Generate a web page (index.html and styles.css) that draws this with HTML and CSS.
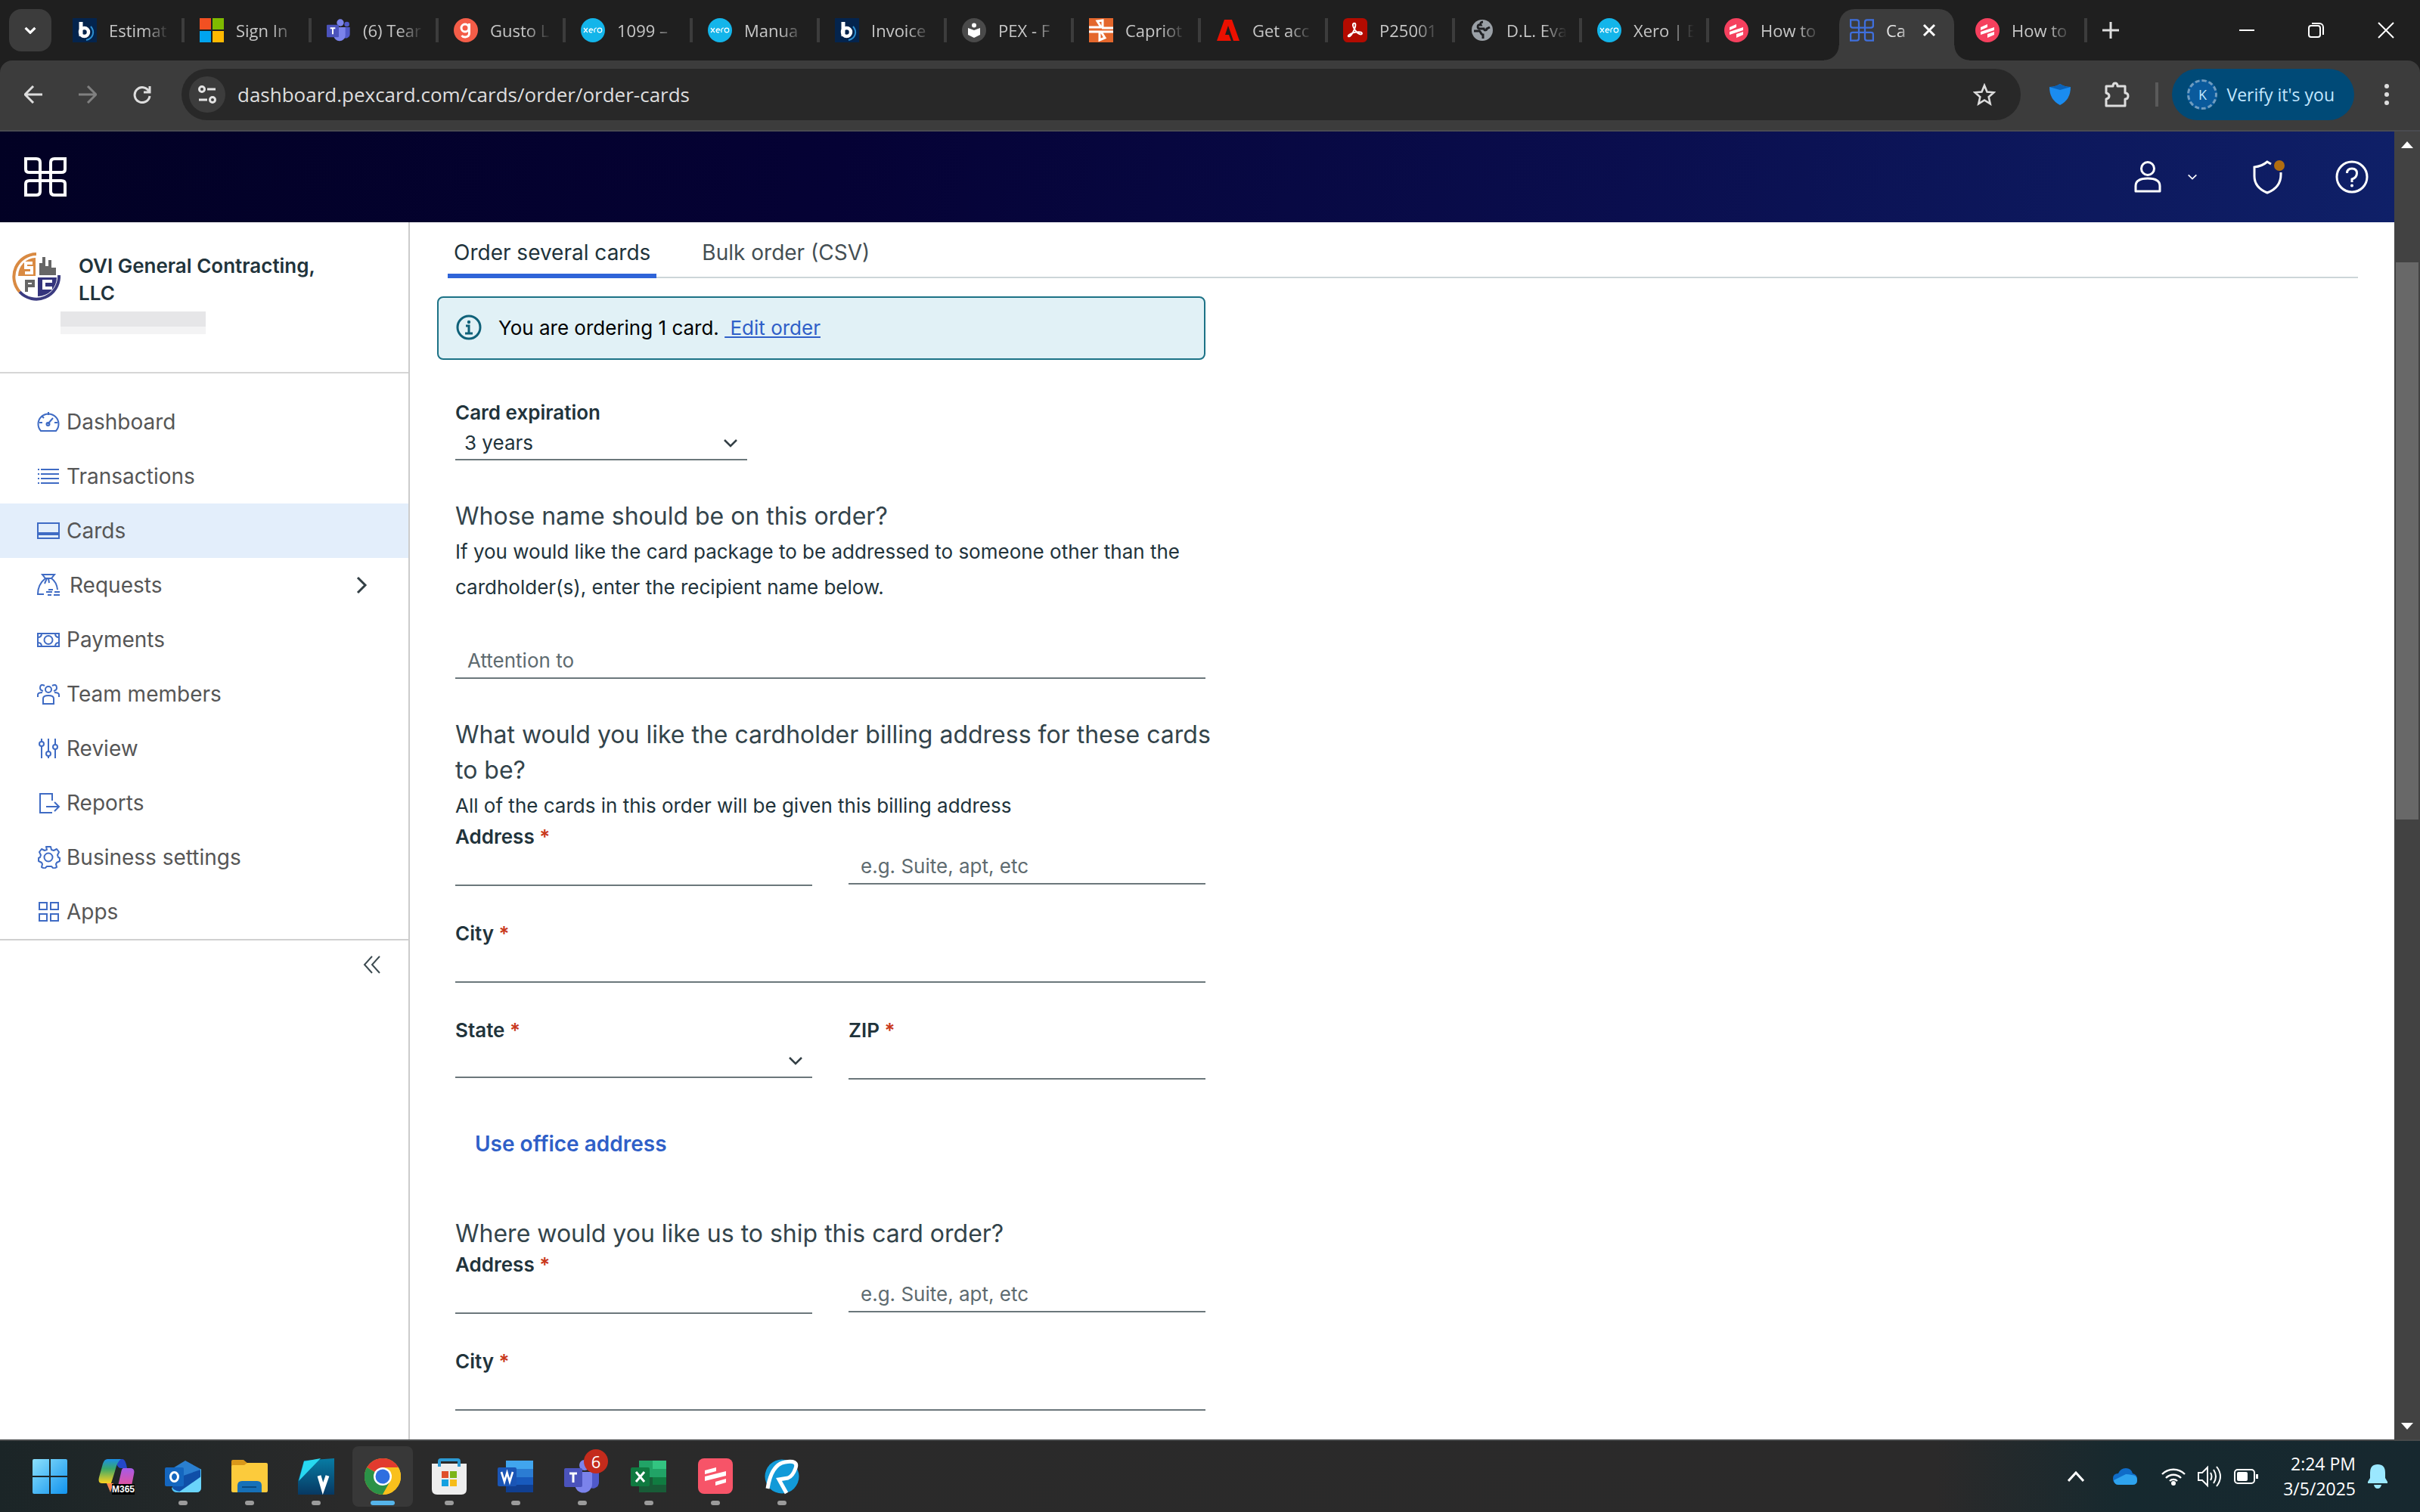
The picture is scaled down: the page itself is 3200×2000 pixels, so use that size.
FILE: index.html
```html
<!DOCTYPE html>
<html lang="en">
<head>
<meta charset="utf-8">
<title>Cards - PEX</title>
<link rel="stylesheet" href="styles.css">
</head>
<body>
<svg class="defs" aria-hidden="true">
  <defs>
    <symbol id="bill" viewBox="0 0 32 32"><rect width="32" height="32" fill="#04244d"/><path d="M11 5v19" stroke="#fff" stroke-width="5"/><circle cx="15.500" cy="18.500" r="5.500" fill="none" stroke="#fff" stroke-width="4.500"/><path d="M24 11c6 7 3 16-6 18" stroke="#2d8fd0" stroke-width="2" fill="none"/></symbol>
    <symbol id="ms" viewBox="0 0 32 32"><path fill="#f25022" d="M0 0h15v15H0z"/><path fill="#7fba00" d="M17 0h15v15H17z"/><path fill="#00a4ef" d="M0 17h15v15H0z"/><path fill="#ffb900" d="M17 17h15v15H17z"/></symbol>
    <symbol id="teams" viewBox="0 0 48 48"><circle cx="27" cy="9" r="7" fill="#7b83eb"/><circle cx="40" cy="12" r="5" fill="#5059c9"/><path d="M32 18h14v14a8 8 0 0 1-14 5z" fill="#5059c9"/><path d="M14 18h23v16a11 11 0 0 1-23 0z" fill="#7b83eb"/><rect y="13" width="24" height="25" rx="2" fill="#4b53bc"/><path d="M7 20h10M12 20v12" stroke="#fff" stroke-width="3"/></symbol>
    <symbol id="gusto" viewBox="0 0 32 32"><circle cx="16" cy="16" r="16" fill="#f45d48"/><circle cx="15" cy="13" r="5" fill="none" stroke="#fff" stroke-width="3"/><path d="M20.500 7v13c0 6-8 6-10 3" fill="none" stroke="#fff" stroke-width="3"/></symbol>
    <symbol id="xero" viewBox="0 0 32 32"><circle cx="16" cy="16" r="16" fill="#13b5ea"/><path d="M4 13l5 6M9 13l-5 6M11 16h5a2.500 2.500 0 1 0-1 2.500M18 19v-3q0-3 3-3" fill="none" stroke="#fff" stroke-width="1.200"/><circle cx="25" cy="16" r="2.800" fill="none" stroke="#fff" stroke-width="1.200"/></symbol>
    <symbol id="reader" viewBox="0 0 32 32"><circle cx="16" cy="16" r="16" fill="#4a4a4a"/><circle cx="16" cy="9.500" r="3" fill="#fff"/><path d="M8 13l8 3 8-3v9l-8 4-8-4z" fill="#fff"/></symbol>
    <symbol id="capriotti" viewBox="0 0 32 32"><rect width="32" height="32" fill="#e4672c"/><path d="M0 12h16l-5-8v0l7-1v9M32 18H16l5 8-7 3V18M0 18h15M17 13h15" fill="none" stroke="#fff" stroke-width="3"/></symbol>
    <symbol id="adobe" viewBox="0 0 32 32"><path d="M11 2h10l10 28h-8L16 10l-4 12h5l3 8H1z" fill="#eb1000"/></symbol>
    <symbol id="pdf" viewBox="0 0 32 32"><rect width="32" height="32" rx="6" fill="#b30b00"/><path d="M14 7c4-2 3 6-3 15-3 4-6 2-3 0 5-4 16-5 17-2 0 3-6 1-9-4-3-4-4-8-2-9z" fill="none" stroke="#fff" stroke-width="2"/></symbol>
    <symbol id="globe" viewBox="0 0 32 32"><circle cx="16" cy="16" r="14" fill="#9aa0a6"/><path d="M17 5c-3 0-4 2-3 4h-3c-2 2-1 5 2 5h5c1 3 4 2 4 0l4-2M5 17h7c2 0 2 5 5 5v5" fill="none" stroke="#202124" stroke-width="3"/></symbol>
    <symbol id="ramp" viewBox="0 0 32 32"><circle cx="16" cy="16" r="16" fill="#f5405e"/><path d="M7 12l9-4v4l-9 4zM7 18l18-6v4L7 22zM16 21l9-3v4l-9 4z" fill="#fff"/></symbol>
    <symbol id="loops" viewBox="0 0 56 52"><path d="M2 2H16q5 0 5 5V45q0 5-5 5H2V35q0-4 5-4h42q5 0 5 4v15H40q-5 0-5-5V7q0-5 5-5h14V16q0 4-5 4H7q-5 0-5-4z" fill="none" stroke="currentColor" stroke-width="4"/></symbol>
    <symbol id="chev" viewBox="0 0 20 12"><path d="M2 2l8 8 8-8" fill="none" stroke="currentColor" stroke-width="2.500"/></symbol>
  </defs>
</svg>

<header class="browser">
  <div class="tabstrip">
    <button class="tab-search" aria-label="Search tabs"><svg width="16" height="10" viewBox="0 0 20 12"><path d="M2 2l8 8 8-8" fill="none" stroke="#fff" stroke-width="4"/></svg></button>
    <div class="tab"><svg class="fav"><use href="#bill"/></svg><span class="tab-title">Estimat</span></div>
    <div class="tab"><svg class="fav"><use href="#ms"/></svg><span class="tab-title">Sign In</span></div>
    <div class="tab"><svg class="fav"><use href="#teams"/></svg><span class="tab-title">(6) Tear</span></div>
    <div class="tab"><svg class="fav"><use href="#gusto"/></svg><span class="tab-title">Gusto L</span></div>
    <div class="tab"><svg class="fav"><use href="#xero"/></svg><span class="tab-title">1099 –</span></div>
    <div class="tab"><svg class="fav"><use href="#xero"/></svg><span class="tab-title">Manua</span></div>
    <div class="tab"><svg class="fav"><use href="#bill"/></svg><span class="tab-title">Invoice</span></div>
    <div class="tab"><svg class="fav"><use href="#reader"/></svg><span class="tab-title">PEX - F</span></div>
    <div class="tab"><svg class="fav"><use href="#capriotti"/></svg><span class="tab-title">Capriot</span></div>
    <div class="tab"><svg class="fav"><use href="#adobe"/></svg><span class="tab-title">Get acc</span></div>
    <div class="tab"><svg class="fav"><use href="#pdf"/></svg><span class="tab-title">P25001</span></div>
    <div class="tab"><svg class="fav"><use href="#globe"/></svg><span class="tab-title">D.L. Eva</span></div>
    <div class="tab"><svg class="fav"><use href="#xero"/></svg><span class="tab-title">Xero | E</span></div>
    <div class="tab tab-plain"><svg class="fav"><use href="#ramp"/></svg><span class="tab-title">How to</span></div>
    <div class="tab tab-active"><svg class="fav"><use href="#loops"/></svg><span class="tab-title">Ca</span><button class="tab-close" aria-label="Close tab"><svg width="18" height="18" viewBox="0 0 18 18"><path d="M2 2l14 14M16 2L2 16" stroke="#fff" stroke-width="3"/></svg></button></div>
    <div class="tab tab-after"><svg class="fav"><use href="#ramp"/></svg><span class="tab-title">How to</span></div>
    <button class="new-tab" aria-label="New tab"><svg width="22" height="22" viewBox="0 0 22 22"><path d="M11 0v22M0 11h22" stroke="#ddd" stroke-width="3"/></svg></button>
    <div class="window-controls">
      <button aria-label="Minimize"><svg width="22" height="22" viewBox="0 0 22 22"><path d="M1 11h20" stroke="#fff" stroke-width="2"/></svg></button>
      <button aria-label="Restore"><svg width="22" height="22" viewBox="0 0 22 22"><g fill="none" stroke="#fff" stroke-width="2"><rect x="1" y="5" width="15" height="15" rx="3"/><path d="M5 2h10a5 5 0 0 1 5 5v10"/></g></svg></button>
      <button aria-label="Close"><svg width="22" height="22" viewBox="0 0 22 22"><path d="M1 1l20 20M21 1L1 21" stroke="#fff" stroke-width="2"/></svg></button>
    </div>
  </div>
  <div class="toolbar">
    <div class="nav-buttons">
      <button aria-label="Back"><svg width="24" height="24" viewBox="0 0 24 24"><path d="M12 1L1 12l11 11M1 12h23" fill="none" stroke="#ddd" stroke-width="3"/></svg></button>
      <button aria-label="Forward"><svg width="24" height="24" viewBox="0 0 24 24"><path d="M12 1l11 11-11 11M23 12H0" fill="none" stroke="#808080" stroke-width="3"/></svg></button>
      <button aria-label="Reload"><svg width="24" height="24" viewBox="0 0 24 24"><path d="M22 1v8h-8M21 8A10 10 0 1 0 22 14" fill="none" stroke="#ddd" stroke-width="3"/></svg></button>
    </div>
    <div class="omnibox">
      <span class="site-info"><svg width="26" height="26" viewBox="0 0 26 26"><g fill="none" stroke="#e3e3e3" stroke-width="3"><circle cx="6" cy="6" r="3.500"/><path d="M13 6h11M2 20h11"/><circle cx="20" cy="20" r="3.500"/></g></svg></span>
      <input class="url" aria-label="Address and search bar" value="dashboard.pexcard.com/cards/order/order-cards">
      <svg width="30" height="30" viewBox="0 0 30 30"><path d="M15 3l3.500 8.500 9 .8-6.800 6 2 9L15 22.500 7.300 27.300l2-9-6.800-6 9-.8z" fill="none" stroke="#ddd" stroke-width="2.600"/></svg>
    </div>
    <svg class="extension" width="28" height="28" viewBox="0 0 28 28"><path d="M14 0q6 4 14 4 0 17-14 24Q0 21 0 4q8 0 14-4z" fill="#1a8cf0"/><path d="M0 4q7 0 14-4 6 4 14 4l-14 4z" fill="#0b62b8"/></svg>
    <svg width="34" height="34" viewBox="0 0 34 34"><path d="M3 6h9q0-4 3-4t3 4h10v9q4 0 4 4t-4 4v9H3v-9q4-1 4-4t-4-4z" fill="none" stroke="#ddd" stroke-width="3" stroke-linejoin="round"/></svg>
    <span class="bar-divider"></span>
    <button class="verify"><span class="avatar">K</span>Verify it's you</button>
    <svg width="6" height="28" viewBox="0 0 6 28"><g fill="#ddd"><circle cx="3" cy="3" r="3"/><circle cx="3" cy="14" r="3"/><circle cx="3" cy="25" r="3"/></g></svg>
  </div>
</header>

<div class="viewport">
  <div class="app">
    <div class="app-header">
      <a href="#" class="brand" aria-label="PEX"><svg width="56" height="52"><use href="#loops"/></svg></a>
      <div class="header-actions">
        <button class="user" aria-label="Account"><svg width="36" height="44" viewBox="0 0 36 44"><g fill="none" stroke="#fff" stroke-width="3"><circle cx="18" cy="11" r="8.500"/><path d="M2 41V34q0-10 16-10t16 10v7z" stroke-linejoin="round"/></g></svg><svg width="14" height="8"><use href="#chev"/></svg></button>
        <button class="shield" aria-label="Security"><svg width="42" height="46" viewBox="0 0 42 46"><path d="M24 6L19 3Q12 9 2 10v12q0 15 17 22Q37 37 37 20v-3" fill="none" stroke="#fff" stroke-width="3"/><circle cx="35" cy="8" r="7" fill="#b06d10"/></svg></button>
        <button aria-label="Help"><svg width="44" height="44" viewBox="0 0 44 44"><g fill="none" stroke="#fff" stroke-width="3"><circle cx="22" cy="22" r="20"/><path d="M15.500 17q0-6 6.500-6t6.500 6-6.500 8v4"/></g><circle cx="22" cy="33.500" r="2" fill="#fff"/></svg></button>
      </div>
    </div>
    <div class="app-body">
      <aside class="sidebar">
        <div class="company">
          <svg width="64" height="64" viewBox="0 0 64 64"><path d="M32 2A30 30 0 0 0 10 52" fill="none" stroke="#d98a42" stroke-width="4"/><path d="M10 52A30 30 0 0 0 62 30" fill="none" stroke="#3b3b80" stroke-width="4"/><path d="M31 7v24H8A24 24 0 0 1 31 7z" fill="#d98a42"/><path d="M34 33h25A25 25 0 0 1 34 58z" fill="#33337c"/><path d="M36 30V14h4V6h4v12h4V10h4v10h6v10z" fill="#666"/><path d="M27 14h-9v6h8v7h-9" fill="none" stroke="#fff" stroke-width="4"/><path d="M19 52V38h9v6h-9" fill="none" stroke="#666" stroke-width="4"/><path d="M53 38h-11v9h11" fill="none" stroke="#fff" stroke-width="4"/></svg>
          <div class="company-text"><strong class="company-name">OVI General Contracting, LLC</strong><span class="redacted"></span></div>
        </div>
        <nav class="menu">
          <a href="#"><svg viewBox="0 0 30 30"><path d="M5 27A13.500 13.500 0 1 1 25 27z"/><path d="M15 2v4M3 16h4M23 16h4M6 7l3 3M14 18l7-8"/><circle cx="14.500" cy="18" r="2"/></svg>Dashboard</a>
          <a href="#"><svg viewBox="0 0 30 30"><path d="M1 6h2M5 6h24M1 12h2M5 12h24M1 18h2M5 18h24M1 24h2M5 24h24"/></svg>Transactions</a>
          <a href="#" class="current"><svg viewBox="0 0 30 30"><path d="M1 5h28v20H1zM1 18h28M1 20h28"/></svg>Cards</a>
          <a href="#"><svg viewBox="0 0 30 30"><path d="M7 1h16l-4 5h-8zM11 6Q1 14 1 27h8M19 6q7 5 8 15M13 6l-3 7M15 6l1 6M15 21h6M12 24h8M23 24h7M14 28h5M22 28h8"/></svg><span class="wide-gap">Requests</span><svg class="more" viewBox="0 0 16 24"><path d="M3 2l10 10L3 22"/></svg></a>
          <a href="#"><svg viewBox="0 0 30 30"><path d="M1 7h28v17H1zM1 12q5 0 5-5M24 7q0 5 5 5M1 19q5 0 5 5M29 19q-5 0-5 5"/><circle cx="15" cy="15.500" r="5.500"/></svg>Payments</a>
          <a href="#"><svg viewBox="0 0 30 30"><circle cx="15" cy="9" r="4"/><path d="M8 28v-7q0-4 7-4t7 4v7zM10 4Q4 1 4 7q0 3 4 4M20 4q6-3 6 3 0 3-4 4M1 19v-3q0-3 6-3M29 19v-3q0-3-6-3"/></svg>Team members</a>
          <a href="#"><svg viewBox="0 0 30 30"><path d="M6 2v4M6 12v16M15 2v17M15 25v3M24 2v8M24 16v12"/><circle cx="6" cy="9" r="3"/><circle cx="15" cy="22" r="3"/><circle cx="24" cy="13" r="3"/></svg>Review</a>
          <a href="#"><svg viewBox="0 0 30 30"><path d="M20 12V3H4v25h16M12 20h16M23 14l6 6-6 6"/></svg>Reports</a>
          <a href="#"><svg viewBox="0 0 30 30"><path d="M12 1h6l1 4 3 1 4-2 3 4-2 4 1 3 2 1v4l-4 2-1 2 1 4-4 2-3-3h-6l-3 3-4-2 1-4-1-2-4-2v-4l2-1 1-3-2-4 3-4 4 2 3-1z" stroke-linejoin="round"/><circle cx="15" cy="15" r="5.500"/></svg>Business settings</a>
          <a href="#"><svg viewBox="0 0 30 30"><path d="M3 3h10v9H3zM18 3h10v9H18zM3 18h10v9H3zM18 18h10v9H18z"/></svg>Apps</a>
        </nav>
        <button class="collapse" aria-label="Collapse menu"><svg width="24" height="24" viewBox="0 0 24 24"><path d="M12 1L2 12l10 11M22 1L12 12l10 11" fill="none" stroke="#3c4a50" stroke-width="2"/></svg></button>
      </aside>
      <main class="content">
        <div class="page-tabs" role="tablist">
          <button class="page-tab selected" role="tab" aria-selected="true">Order several cards</button>
          <button class="page-tab" role="tab" aria-selected="false">Bulk order (CSV)</button>
        </div>
        <form class="order">
          <div class="alert">
            <svg width="34" height="34" viewBox="0 0 34 34"><circle cx="17" cy="17" r="15" fill="none" stroke="#0f6179" stroke-width="3"/><circle cx="17" cy="10" r="2.200" fill="#0f6179"/><path d="M13 15h4v9M12 25h10" fill="none" stroke="#0f6179" stroke-width="3"/></svg>
            <p>You are ordering 1 card.&nbsp;<a href="#">&nbsp;Edit order</a></p>
          </div>
          <div class="fields">
            <div class="field expiration">
              <label for="exp">Card expiration</label>
              <span class="select"><select id="exp"><option>3 years</option></select><svg width="20" height="12"><use href="#chev"/></svg></span>
            </div>
            <section>
              <h2>Whose name should be on this order?</h2>
              <p>If you would like the card package to be addressed to someone other than the cardholder(s), enter the recipient name below.</p>
              <div class="field attention"><input aria-label="Attention to" placeholder="Attention to"></div>
            </section>
            <section>
              <h2>What would you like the cardholder billing address for these cards to be?</h2>
              <p>All of the cards in this order will be given this billing address</p>
              <div class="grid">
                <div class="field"><label for="b-addr">Address <span class="req">*</span></label><input id="b-addr"></div>
                <div class="field unlabeled"><input aria-label="Address line 2" placeholder="e.g. Suite, apt, etc"></div>
                <div class="field full"><label for="b-city">City <span class="req">*</span></label><input id="b-city"></div>
                <div class="field"><label for="b-state">State <span class="req">*</span></label><span class="select"><select id="b-state"><option></option></select><svg width="20" height="12"><use href="#chev"/></svg></span></div>
                <div class="field"><label for="b-zip">ZIP <span class="req">*</span></label><input id="b-zip"></div>
              </div>
              <button type="button" class="link-button">Use office address</button>
            </section>
            <section class="shipping">
              <h2>Where would you like us to ship this card order?</h2>
              <div class="grid">
                <div class="field"><label for="s-addr">Address <span class="req">*</span></label><input id="s-addr"></div>
                <div class="field unlabeled"><input aria-label="Shipping address line 2" placeholder="e.g. Suite, apt, etc"></div>
                <div class="field full"><label for="s-city">City <span class="req">*</span></label><input id="s-city"></div>
              </div>
            </section>
          </div>
        </form>
      </main>
    </div>
  </div>
  <div class="scrollbar">
    <svg width="16" height="9" viewBox="0 0 16 9"><path d="M8 0l8 9H0z" fill="#fff"/></svg>
    <div class="track"><div class="thumb"></div></div>
    <svg width="16" height="9" viewBox="0 0 16 9"><path d="M8 9L0 0h16z" fill="#fff"/></svg>
  </div>
</div>

<footer class="taskbar">
  <div class="apps">
    <button class="task" aria-label="Start"><svg width="48" height="48" viewBox="0 0 48 48"><defs><linearGradient id="win" x2="1" y2="1"><stop stop-color="#8be0fc"/><stop offset="1" stop-color="#1193ee"/></linearGradient></defs><path fill="url(#win)" d="M1 3q0-2 2-2h20v22H1zM25 1h20q2 0 2 2v20H25zM1 25h22v22H3q-2 0-2-2zM25 25h22v20q0 2-2 2H25z"/></svg></button>
    <button class="task" aria-label="Microsoft 365 Copilot"><svg width="48" height="48" viewBox="0 0 48 48"><defs><linearGradient id="cpl" x2="0" y2="1"><stop stop-color="#1a8fe8"/><stop offset=".4" stop-color="#3aa86a"/><stop offset="1" stop-color="#ffd21e"/></linearGradient><linearGradient id="cpr" x2="0" y2="1"><stop stop-color="#a65be8"/><stop offset="1" stop-color="#f0508c"/></linearGradient></defs><path d="M24 1h8q4 0 6 12h-8q-4 0-6-6z" fill="#2448c8"/><path d="M12 1h18q-5 3-8 16l-5 16H5q-6 0-4-8L6 7q2-6 6-6z" fill="url(#cpl)"/><path d="M33 13h9q7 0 5 8l-4 20H25l5-22q1-6 3-6z" fill="url(#cpr)"/><path d="M11 33h9l-4 12z" fill="#ff8a50"/><rect x="18" y="34" width="30" height="14" fill="#000"/><text x="33" y="45" class="m365">M365</text></svg></button>
    <button class="task running" aria-label="Outlook"><svg width="48" height="48" viewBox="0 0 48 48"><path d="M9 14L27 3l20 11v10L20 34z" fill="#2a7fd0"/><path d="M48 14v24q0 7-6 7H16q-6 0-7-6z" fill="#53c4f4"/><path d="M10 28l37-13v12L20 44q-10-2-10-6z" fill="#0f4fa8"/><path d="M48 24v14q0 7-6 7H18z" fill="#6ad4fa"/><rect y="12" width="25" height="25" rx="2" fill="#1466bf"/><ellipse cx="12.500" cy="24.500" rx="5" ry="6" fill="none" stroke="#fff" stroke-width="3"/></svg></button>
    <button class="task running" aria-label="File Explorer"><svg width="48" height="48" viewBox="0 0 48 48"><path d="M0 4q0-2 2-2h14l6 5v8H0z" fill="#d9981a"/><path d="M0 11q0-2 2-2h15l4-3h25q2 0 2 2v35q0 2-2 2H2q-2 0-2-2z" fill="#fccb3c"/><path d="M8 45V36q0-6 6-6h20q6 0 6 6v9z" fill="#1670b8"/><path d="M14 38h19" stroke="#0a4a80" stroke-width="2"/></svg></button>
    <button class="task running" aria-label="Viewer"><svg width="48" height="48" viewBox="0 0 48 48"><defs><linearGradient id="vu" x2="0" y2="1"><stop stop-color="#087ca4"/><stop offset="1" stop-color="#073862"/></linearGradient></defs><path d="M8 3L48 0v48H0V30z" fill="url(#vu)"/><path d="M8 4l22-4L1 30z" fill="#28d8f0"/><path d="M28 23l5 17 6-17" fill="none" stroke="#fff" stroke-width="5"/></svg></button>
    <button class="task running active" aria-label="Chrome"><svg width="48" height="48" viewBox="0 0 48 48"><circle cx="24" cy="24" r="24" fill="#f9c01c"/><path d="M24 24L3.200 12A24 24 0 0 1 44.800 12H24z" fill="#e23b2e"/><path d="M3.200 12A24 24 0 0 0 24 48l10-18-10-6z" fill="#2b9247"/><path d="M24 12h20.800A24 24 0 0 1 24 48l10.400-18z" fill="#f9c01c"/><circle cx="24" cy="24" r="12" fill="#fff"/><circle cx="24" cy="24" r="9.500" fill="#2f6fe0"/></svg></button>
    <button class="task running" aria-label="Microsoft Store"><svg width="48" height="48" viewBox="0 0 48 48"><path d="M1 7h46v34q0 7-7 7H8q-7 0-7-7z" fill="#eee"/><path d="M11 11V4q0-2 2-2h22q2 0 2 2v7" fill="none" stroke="#2c9ad4" stroke-width="4"/><path fill="#e0502c" d="M14 17h9v9h-9z"/><path fill="#7bb518" d="M25 17h9v9h-9z"/><path fill="#14a0e0" d="M14 28h9v9h-9z"/><path fill="#f6bc18" d="M25 28h9v9h-9z"/></svg></button>
    <button class="task running" aria-label="Word"><svg width="48" height="48" viewBox="0 0 48 48"><path fill="#41a5ee" d="M11 3h36v11H11z"/><path fill="#2b7cd3" d="M11 14h36v11H11z"/><path fill="#185abd" d="M11 25h36v10H11z"/><path fill="#103f91" d="M11 35h36v10H11z"/><rect y="12" width="25" height="25" rx="2" fill="#1a55b5"/><path d="M5 18l4 13 3.500-12 3.500 12 4-13" fill="none" stroke="#fff" stroke-width="2.600"/></svg></button>
    <button class="task running" aria-label="Teams"><svg width="48" height="48"><use href="#teams"/></svg><span class="badge">6</span></button>
    <button class="task running" aria-label="Excel"><svg width="48" height="48" viewBox="0 0 48 48"><path fill="#21a366" d="M11 3h18v22H11z"/><path fill="#33c481" d="M29 3h18v11H29z"/><path fill="#21a366" d="M29 14h18v11H29z"/><path fill="#185c37" d="M11 25h36v20H11z"/><path fill="#107c41" d="M29 25h18v10H29z"/><rect y="12" width="25" height="25" rx="2" fill="#0f7a40"/><path d="M7 18l11 13M18 18L7 31" stroke="#fff" stroke-width="3"/></svg></button>
    <button class="task running" aria-label="Ramp"><svg width="48" height="48" viewBox="0 0 48 48"><rect x="1" width="46" height="47" rx="8" fill="#f75468"/><path d="M10 16l15-4v5l-15 4zM10 24l28-7v6l-28 7zM24 31l14-4v5l-14 4z" fill="#fff"/></svg></button>
    <button class="task running" aria-label="Revu"><svg width="48" height="48" viewBox="0 0 48 48"><circle cx="24" cy="24" r="22.500" fill="#129ad8"/><path d="M5 40Q10 8 28 5t14 8-10 13l-12 2 10 18" fill="none" stroke="#fff" stroke-width="5"/></svg></button>
  </div>
  <div class="tray">
    <svg class="caret" width="22" height="14" viewBox="0 0 22 14"><path d="M1 13L11 2l10 11" fill="none" stroke="#fff" stroke-width="3"/></svg>
    <svg class="cloud" width="32" height="24" viewBox="0 0 32 24"><path d="M7 22Q0 22 0 15t7-7q3-7 10-7 7 0 9 7 6 1 6 8t-6 6z" fill="#0f6cc8"/><path d="M1 17l16-8q4 0 8 1 7 0 7 7 0 6-6 6H7q-5 0-6-6z" fill="#2ea3ee"/></svg>
    <svg width="32" height="26" viewBox="0 0 32 26"><g fill="none" stroke="#fff" stroke-width="2.400"><path d="M1 10a21 21 0 0 1 30 0M6 15a14 14 0 0 1 20 0M11 19a7 7 0 0 1 10 0"/></g><circle cx="16" cy="22" r="3" fill="#fff"/></svg>
    <svg width="32" height="30" viewBox="0 0 32 30"><g fill="none" stroke="#fff" stroke-width="2"><path d="M1 10h5l7-7v24l-7-7H1zM17 10q3 5 0 10M21 6q6 9 0 18M25 2q10 13 0 26"/></g></svg>
    <svg width="32" height="22" viewBox="0 0 32 22"><rect x="1" y="2" width="26" height="18" rx="4" fill="none" stroke="#fff" stroke-width="2"/><rect x="4" y="5" width="14" height="12" rx="2" fill="#fff"/><path d="M29 8h3v6h-3z" fill="#fff"/></svg>
    <div class="clock"><span>2:24 PM</span><span>3/5/2025</span></div>
    <svg width="26" height="32" viewBox="0 0 26 32"><path d="M13 0q10 0 10 11v7l3 5v2H0v-2l3-5v-7Q3 0 13 0zM8 27h10q-1 5-5 5t-5-5z" fill="#9be8ff"/></svg>
  </div>
</footer>
</body>
</html>
```
FILE: styles.css
```css
* { box-sizing: border-box; }
html, body { height: 100%; margin: 0; }
body {
  display: flex;
  flex-direction: column;
  font-family: Inter, "Open Sans", sans-serif;
  font-size: 26px;
  color: #21333b;
  background: #fff;
  overflow: hidden;
}
button { padding: 0; border: 0; background: none; font: inherit; color: inherit; }
svg { display: block; flex: none; }
h2, p { margin: 0; }
.defs { position: absolute; width: 0; height: 0; }

/* Browser frame */
.browser { flex: none; font-family: "Open Sans", "Noto Sans", sans-serif; background: #1f1f1f; }
.tabstrip { display: flex; align-items: center; height: 80px; padding-left: 12px; }
.tab-search {
  display: grid; place-items: center;
  width: 56px; height: 56px; margin-right: 12px;
  border-radius: 16px; background: #3c3c3c;
}
.tab {
  display: flex; align-items: center; gap: 16px; flex: none;
  width: 168px; height: 68px; padding: 0 4px 0 16px;
  font-size: 22px; color: #c7c7c7;
}
.tab::after { content: ""; width: 4px; height: 32px; margin-left: auto; background: #3c3c3c; }
.tab-plain::after, .tab-active::after { display: none; }
.tab-after { margin-left: 12px; }
.fav { width: 32px; height: 32px; color: #3f6fdc; }
.tab-title {
  width: 80px; white-space: nowrap;
  -webkit-mask-image: linear-gradient(90deg, #000 60%, transparent);
  mask-image: linear-gradient(90deg, #000 60%, transparent);
}
.tab-active {
  position: relative; align-self: flex-end;
  width: 152px; padding: 0 12px 12px 14px;
  border-radius: 20px 20px 0 0; background: #3c3c3c; color: #e3e3e3;
}
.tab-active .tab-title { width: 32px; }
.tab-active::before {
  content: ""; position: absolute; left: -20px; right: -20px; bottom: 0; height: 20px;
  background:
    radial-gradient(circle at 0 0, transparent 19px, #3c3c3c 20px) left / 20px 20px no-repeat,
    radial-gradient(circle at 100% 0, transparent 19px, #3c3c3c 20px) right / 20px 20px no-repeat;
}
.new-tab { margin-left: 16px; }
.window-controls { display: flex; gap: 70px; margin-left: auto; padding-right: 34px; }
.toolbar {
  display: flex; align-items: center;
  height: 94px; padding: 0 41px 2px 32px;
  border-bottom: 2px solid #4a4b50;
  border-radius: 16px 16px 0 0; background: #3c3c3c;
}
.extension { margin: 0 44px 0 38px; }
.nav-buttons { display: flex; gap: 48px; margin-right: 40px; }
.omnibox {
  display: flex; flex: 1; align-items: center; gap: 16px;
  height: 68px; padding: 0 33px 0 10px;
  border-radius: 34px; background: #282828;
}
.site-info { display: grid; place-items: center; width: 48px; height: 48px; border-radius: 24px; background: #3c3c3c; }
.url { flex: 1; padding: 0; border: 0; background: none; font: inherit; color: #dedede; }
.bar-divider { width: 4px; height: 32px; margin: 0 18px 0 34px; background: #5a5a5a; }
.verify {
  display: flex; align-items: center; gap: 12px;
  height: 68px; margin-right: 40px; padding: 0 26px 0 20px;
  border-radius: 34px; background: #004a77; color: #c2e7ff; font-size: 23px;
}
.avatar {
  display: grid; place-items: center; width: 40px; height: 40px;
  border: 3px dashed #6f9cc0; border-radius: 20px; font-size: 18px; background: #0a5a9c;
}

/* Page viewport */
.viewport { display: flex; flex: 1; min-height: 0; }
.app { display: flex; flex: 1; flex-direction: column; min-width: 0; }
.app-header {
  display: flex; flex: none; align-items: center; justify-content: space-between;
  height: 120px; padding: 0 34px 0 32px;
  background: linear-gradient(100deg, #020124 0%, #050235 35%, #0a0e4e 68%, #0f2068 100%);
}
.brand { color: #fff; }
.header-actions { display: flex; align-items: center; }
.user { display: flex; align-items: center; gap: 34px; margin-right: 73px; color: #fff; }
.shield { margin-right: 67px; }
.app-body { display: flex; flex: 1; min-height: 0; }

/* Sidebar */
.sidebar { flex: none; width: 542px; border-right: 2px solid #ccc; }
.company { display: flex; height: 200px; padding: 40px 16px 0; gap: 24px; border-bottom: 2px solid #d6d6d6; }
.company-text { width: 340px; }
.company-name { display: block; font-weight: 600; line-height: 36px; }
.redacted { display: block; width: 192px; height: 30px; margin: 6px 0 0 -24px; background: linear-gradient(#e6e6e8 66%, #f3f3f4 66%); }
.menu { padding-top: 28px; border-bottom: 2px solid #d0d0d0; }
.menu a {
  display: flex; align-items: center; gap: 8px;
  height: 72px; padding: 0 54px 0 48px;
  color: #565656; font-size: 28px; text-decoration: none;
}
.menu svg { width: 32px; height: 30px; fill: none; stroke: #3f6bc4; stroke-width: 2; }
.menu .current { background: #e3eefb; }
.menu .wide-gap { padding-left: 4px; }
.menu .more { width: 16px; height: 24px; margin-left: auto; stroke: #333f45; stroke-width: 3; }
.collapse { display: block; margin: 20px 36px 0 auto; }

/* Order form */
.content { flex: 1; min-width: 0; padding: 0 48px 0 36px; overflow: hidden; }
.page-tabs { display: flex; gap: 52px; height: 74px; margin-left: 14px; border-bottom: 2px solid #ccd5d8; }
.page-tab { height: 74px; padding: 12px 8px 0; border-bottom: 6px solid transparent; font-size: 28px; color: #454f54; }
.page-tab.selected { border-color: #2f64d8; color: #21333b; }
.order { max-width: 1016px; margin-top: 24px; }
.alert {
  display: flex; align-items: center; gap: 22px;
  height: 84px; padding: 0 0 2px 23px;
  border: 2px solid #1c7286; border-radius: 8px;
  background: #e1f1f6; color: #000;
}
.alert a { color: #2f5fc8; }
.fields { padding: 52px 0 0 24px; }
.field { display: flex; flex-direction: column; }
.expiration { width: 386px; }
label { font-weight: 600; line-height: 35px; }
.req { color: #c9381c; }
input { min-width: 0; }
.field input, select {
  width: 100%; height: 48px; padding: 0 16px;
  border: 0; border-bottom: 2px solid #6b777b; border-radius: 0;
  background: none; font: inherit; color: #21333b;
}
.field input::placeholder { color: #5e6b70; opacity: 1; }
.select { display: grid; align-items: center; }
.select > * { grid-area: 1 / 1; }
.select svg { justify-self: end; margin-right: 12px; pointer-events: none; color: #333f45; }
select { height: 46px; padding: 0 12px; appearance: none; }
section { margin-top: 50px; line-height: 47px; }
/* Headings may run slightly past the field column before they wrap */
h2 { margin-right: -24px; font-size: 32px; font-weight: 400; color: #33444b; }
.attention { margin-top: 50px; }
.grid { display: grid; grid-template-columns: 1fr 1fr; gap: 45px 48px; align-items: start; }
.full { grid-column: 1 / -1; }
.unlabeled { padding-top: 33px; }
.link-button { display: block; height: 70px; margin-top: 50px; padding: 0 26px; font-size: 28px; font-weight: 600; color: #2f5fc8; }
.shipping { margin-top: 60px; }

.scrollbar { display: flex; flex: none; flex-direction: column; align-items: center; width: 34px; padding: 13px 0; background: #424242; }
.track { flex: 1; width: 30px; padding-top: 151px; }
.thumb { height: 48%; background: #686868; }

/* Taskbar */
.taskbar {
  display: flex; flex: none; justify-content: space-between;
  height: 96px; padding: 0 43px 0 22px;
  border-top: 2px solid #484a4b;
  background: linear-gradient(90deg, #1b2527 0, #2a2a2a 14%, #2b2a2a 80%, #16292f 88%, #17282f 100%);
  font-family: "Open Sans", "Noto Sans", sans-serif;
}
.apps { display: flex; align-items: center; }
.task { position: relative; display: grid; place-items: center; width: 80px; height: 80px; margin: 0 4px; border-radius: 8px; }
.task.running::after { content: ""; position: absolute; bottom: 2px; left: 34px; width: 12px; height: 6px; border-radius: 3px; background: #9b9b9b; }
.task.active { background: #383838; }
.task.active::after { left: 24px; width: 32px; background: #55b4ea; }
.badge {
  position: absolute; top: 4px; right: 6px;
  display: grid; place-items: center; width: 32px; height: 32px;
  border-radius: 16px; background: #c42b1c; color: #fff; font-size: 22px; line-height: 32px;
}
.m365 { font: 700 12px "Liberation Sans", sans-serif; fill: #fff; text-anchor: middle; }
.tray { display: flex; align-items: center; gap: 16px; color: #fff; font-size: 23px; }
.tray .caret { margin-right: 22px; }
.tray .cloud { margin-right: 16px; }
.clock { display: flex; flex-direction: column; align-items: flex-end; width: 113px; line-height: 33px; }
```
